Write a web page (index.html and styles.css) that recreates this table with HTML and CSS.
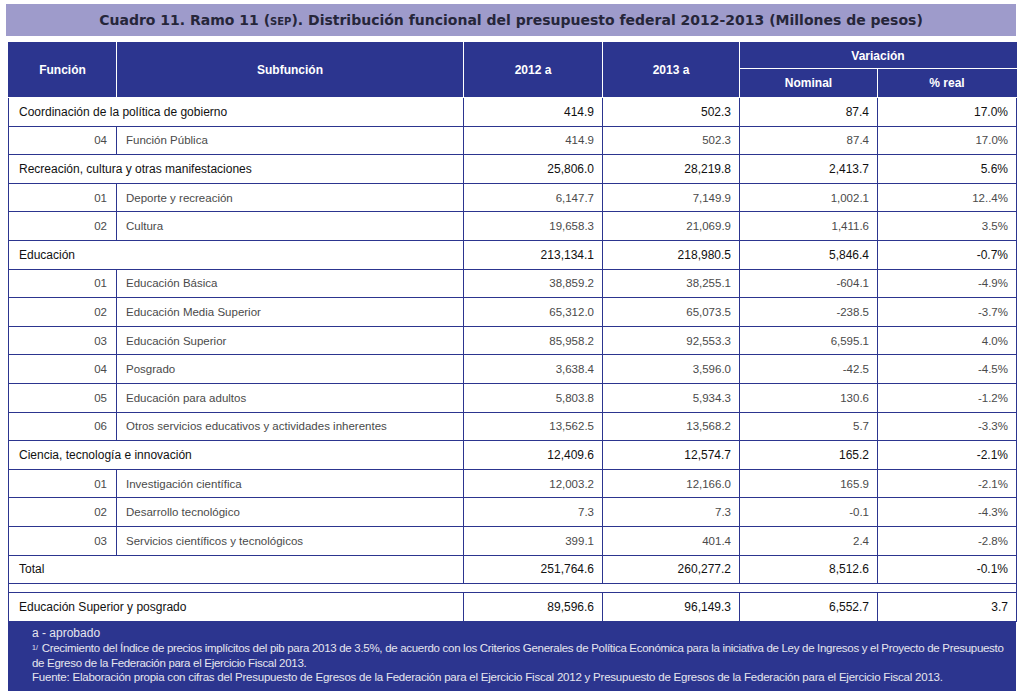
FILE: index.html
```html
<!DOCTYPE html>
<html lang="es">
<head>
<meta charset="utf-8">
<title>Cuadro 11</title>
<link rel="stylesheet" href="styles.css">
</head>
<body>
<div class="page">
  <div class="title">Cuadro 11. Ramo 11 (<span class="sc">sep</span>). Distribución funcional del presupuesto federal 2012-2013 (Millones de pesos)</div>
  <table class="tbl">
    <colgroup>
      <col class="c-fn"><col class="c-sub"><col class="c-a"><col class="c-b"><col class="c-c"><col class="c-d">
    </colgroup>
    <thead>
      <tr class="h1"><th rowspan="2">Función</th><th rowspan="2">Subfunción</th><th rowspan="2">2012 a</th><th rowspan="2">2013 a</th><th colspan="2">Variación</th></tr>
      <tr class="h2"><th>Nominal</th><th>% real</th></tr>
    </thead>
    <tbody>
      <tr class="grp"><td colspan="2" class="lbl">Coordinación de la política de gobierno</td><td>414.9</td><td>502.3</td><td>87.4</td><td>17.0%</td></tr>
      <tr class="sub"><td class="code">04</td><td class="lbl">Función Pública</td><td>414.9</td><td>502.3</td><td>87.4</td><td>17.0%</td></tr>
      <tr class="grp"><td colspan="2" class="lbl">Recreación, cultura y otras manifestaciones</td><td>25,806.0</td><td>28,219.8</td><td>2,413.7</td><td>5.6%</td></tr>
      <tr class="sub"><td class="code">01</td><td class="lbl">Deporte y recreación</td><td>6,147.7</td><td>7,149.9</td><td>1,002.1</td><td>12..4%</td></tr>
      <tr class="sub"><td class="code">02</td><td class="lbl">Cultura</td><td>19,658.3</td><td>21,069.9</td><td>1,411.6</td><td>3.5%</td></tr>
      <tr class="grp"><td colspan="2" class="lbl">Educación</td><td>213,134.1</td><td>218,980.5</td><td>5,846.4</td><td>-0.7%</td></tr>
      <tr class="sub"><td class="code">01</td><td class="lbl">Educación Básica</td><td>38,859.2</td><td>38,255.1</td><td>-604.1</td><td>-4.9%</td></tr>
      <tr class="sub"><td class="code">02</td><td class="lbl">Educación Media Superior</td><td>65,312.0</td><td>65,073.5</td><td>-238.5</td><td>-3.7%</td></tr>
      <tr class="sub"><td class="code">03</td><td class="lbl">Educación Superior</td><td>85,958.2</td><td>92,553.3</td><td>6,595.1</td><td>4.0%</td></tr>
      <tr class="sub"><td class="code">04</td><td class="lbl">Posgrado</td><td>3,638.4</td><td>3,596.0</td><td>-42.5</td><td>-4.5%</td></tr>
      <tr class="sub"><td class="code">05</td><td class="lbl">Educación para adultos</td><td>5,803.8</td><td>5,934.3</td><td>130.6</td><td>-1.2%</td></tr>
      <tr class="sub"><td class="code">06</td><td class="lbl">Otros servicios educativos y actividades inherentes</td><td>13,562.5</td><td>13,568.2</td><td>5.7</td><td>-3.3%</td></tr>
      <tr class="grp"><td colspan="2" class="lbl">Ciencia, tecnología e innovación</td><td>12,409.6</td><td>12,574.7</td><td>165.2</td><td>-2.1%</td></tr>
      <tr class="sub"><td class="code">01</td><td class="lbl">Investigación científica</td><td>12,003.2</td><td>12,166.0</td><td>165.9</td><td>-2.1%</td></tr>
      <tr class="sub"><td class="code">02</td><td class="lbl">Desarrollo tecnológico</td><td>7.3</td><td>7.3</td><td>-0.1</td><td>-4.3%</td></tr>
      <tr class="sub"><td class="code">03</td><td class="lbl">Servicios científicos y tecnológicos</td><td>399.1</td><td>401.4</td><td>2.4</td><td>-2.8%</td></tr>
      <tr class="grp"><td colspan="2" class="lbl">Total</td><td>251,764.6</td><td>260,277.2</td><td>8,512.6</td><td>-0.1%</td></tr>
      <tr class="gap"><td colspan="6"></td></tr>
      <tr class="grp"><td colspan="2" class="lbl">Educación Superior y posgrado</td><td>89,596.6</td><td>96,149.3</td><td>6,552.7</td><td>3.7</td></tr>
    </tbody>
  </table>
  <div class="notes">
    <p class="first">a - aprobado</p>
    <p class="tight"><sup>1/</sup> Crecimiento del Índice de precios implícitos del pib para 2013 de 3.5%, de acuerdo con los Criterios Generales de Política Económica para la iniciativa de Ley de Ingresos y el Proyecto de Presupuesto<br>de Egreso de la Federación para el Ejercicio Fiscal 2013.</p>
    <p class="src">Fuente: Elaboración propia con cifras del Presupuesto de Egresos de la Federación para el Ejercicio Fiscal 2012 y Presupuesto de Egresos de la Federación para el Ejercicio Fiscal 2013.</p>
  </div>
</div>
</body>
</html>
```

FILE: styles.css
```css
html, body {
  margin: 0;
  padding: 0;
  background: #ffffff;
}

.page {
  padding: 4px 0 0 6px;
  width: 1010px;
  font-family: "Liberation Sans", Arial, sans-serif;
}

.title {
  height: 32px;
  background: #9e9bcb;
  color: #26263a;
  font-family: "DejaVu Sans", sans-serif;
  font-weight: bold;
  font-size: 14px;
  display: flex;
  align-items: center;
  justify-content: center;
  letter-spacing: 0;
}

.title .sc {
  font-variant: small-caps;
}

.tbl {
  margin: 6px 0 0 2px;
  width: 1008px;
  table-layout: fixed;
  border-collapse: collapse;
  font-size: 12px;
}

.c-fn { width: 108px; }
.c-sub { width: 347px; }
.c-a { width: 139px; }
.c-b { width: 137px; }
.c-c { width: 138px; }
.c-d { width: 139px; }

.tbl th {
  background: #2c358f;
  color: #ffffff;
  font-weight: bold;
  font-size: 12px;
  border: 1px solid #ffffff;
  border-top: 0;
  padding: 0;
}

.tbl thead tr th:first-child { border-left: 1px solid #2c358f; }
.tbl thead tr th:last-child { border-right: 1px solid #2c358f; }
.tbl thead tr.h1 th { border-top: 1px solid #2c358f; }

.h1 { height: 26px; }
.h2 { height: 29px; }

.tbl td {
  border: 1px solid #2c358f;
  padding: 0 8px 0 9px;
  text-align: right;
  white-space: nowrap;
}

.tbl tbody tr { height: 28.6px; }

.tbl td.lbl {
  text-align: left;
}

.tbl td.code {
  padding-right: 9px;
}

.grp td {
  color: #111111;
  font-size: 12px;
}

.grp td.lbl {
  padding-left: 10px;
}

.sub td {
  color: #4a4a4a;
  font-size: 11.5px;
}

.tbl tbody tr.gap { height: 9px; }
.tbl tbody tr.gap td { padding: 0; }

.notes {
  margin-left: 2px;
  width: 1008px;
  height: 69px;
  box-sizing: border-box;
  background: #2c358f;
  color: #e6e6ee;
  padding: 5px 8px 0 24px;
  font-size: 11.5px;
  line-height: 14.5px;
}

.notes p {
  margin: 0;
  white-space: nowrap;
}

.notes p.first {
  font-size: 12px;
  line-height: 13.5px;
}

.notes p.tight {
  letter-spacing: -0.3px;
  padding-top: 1px;
}

.notes p.src {
  letter-spacing: -0.22px;
}

.notes sup {
  font-size: 7px;
  line-height: 7px;
  vertical-align: 2px;
  letter-spacing: 0;
  margin-right: 1px;
}
```
